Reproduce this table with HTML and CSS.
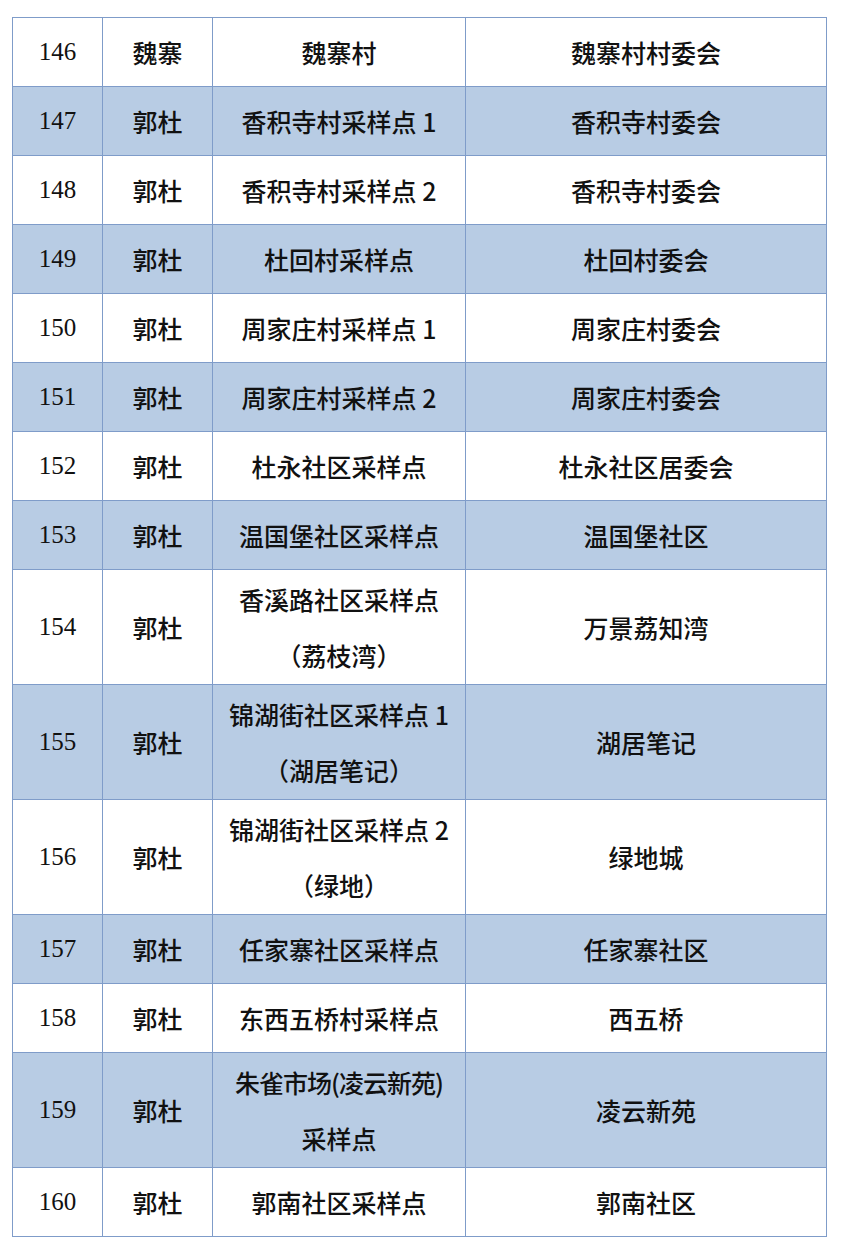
FILE: index.html
```html
<!DOCTYPE html>
<html lang="zh-CN">
<head>
<meta charset="utf-8">
<title>采样点</title>
<link rel="stylesheet" href="styles.css">
</head>
<body>
<table class="sites">
  <colgroup>
    <col class="c-no"><col class="c-town"><col class="c-site"><col class="c-org">
  </colgroup>
  <tbody>
    <tr><td class="no">146</td><td>魏寨</td><td>魏寨村</td><td>魏寨村村委会</td></tr>
    <tr class="alt"><td class="no">147</td><td>郭杜</td><td>香积寺村采样点 1</td><td>香积寺村委会</td></tr>
    <tr><td class="no">148</td><td>郭杜</td><td>香积寺村采样点 2</td><td>香积寺村委会</td></tr>
    <tr class="alt"><td class="no">149</td><td>郭杜</td><td>杜回村采样点</td><td>杜回村委会</td></tr>
    <tr><td class="no">150</td><td>郭杜</td><td>周家庄村采样点 1</td><td>周家庄村委会</td></tr>
    <tr class="alt"><td class="no">151</td><td>郭杜</td><td>周家庄村采样点 2</td><td>周家庄村委会</td></tr>
    <tr><td class="no">152</td><td>郭杜</td><td>杜永社区采样点</td><td>杜永社区居委会</td></tr>
    <tr class="alt"><td class="no">153</td><td>郭杜</td><td>温国堡社区采样点</td><td>温国堡社区</td></tr>
    <tr class="tall"><td class="no">154</td><td>郭杜</td><td>香溪路社区采样点<br>（荔枝湾）</td><td>万景荔知湾</td></tr>
    <tr class="alt tall"><td class="no">155</td><td>郭杜</td><td>锦湖街社区采样点 1<br>（湖居笔记）</td><td>湖居笔记</td></tr>
    <tr class="tall"><td class="no">156</td><td>郭杜</td><td>锦湖街社区采样点 2<br>（绿地）</td><td>绿地城</td></tr>
    <tr class="alt"><td class="no">157</td><td>郭杜</td><td>任家寨社区采样点</td><td>任家寨社区</td></tr>
    <tr><td class="no">158</td><td>郭杜</td><td>东西五桥村采样点</td><td>西五桥</td></tr>
    <tr class="alt tall"><td class="no">159</td><td>郭杜</td><td><span class="narrow">朱雀市场(凌云新苑)</span><br>采样点</td><td>凌云新苑</td></tr>
    <tr class="last"><td class="no">160</td><td>郭杜</td><td>郭南社区采样点</td><td>郭南社区</td></tr>
  </tbody>
</table>
</body>
</html>
```
FILE: styles.css
```css
html, body {
  margin: 0;
  background: #ffffff;
}
body {
  padding: 17px 0 0 12px;
  font-family: "Noto Sans CJK SC", "Noto Sans", sans-serif;
  color: #111111;
}
.sites {
  border-collapse: collapse;
  table-layout: fixed;
  width: 814px;
}
.c-no { width: 90px; }
.c-town { width: 110px; }
.c-site { width: 253px; }
.c-org { width: 361px; }
.sites td {
  border: 1.5px solid #7f9cc9;
  padding: 0;
  height: 68px;
  text-align: center;
  vertical-align: middle;
  font-size: 25px;
  font-weight: 500;
  line-height: 56px;
  white-space: nowrap;
}
.sites tr.tall td { height: 114px; }
.sites tr.alt td { background: #b8cce4; }
.sites td.no {
  font-family: "Liberation Serif", "Times New Roman", serif;
  font-weight: 400;
  font-size: 25px;
}
.narrow {
  letter-spacing: -1px;
}
```
